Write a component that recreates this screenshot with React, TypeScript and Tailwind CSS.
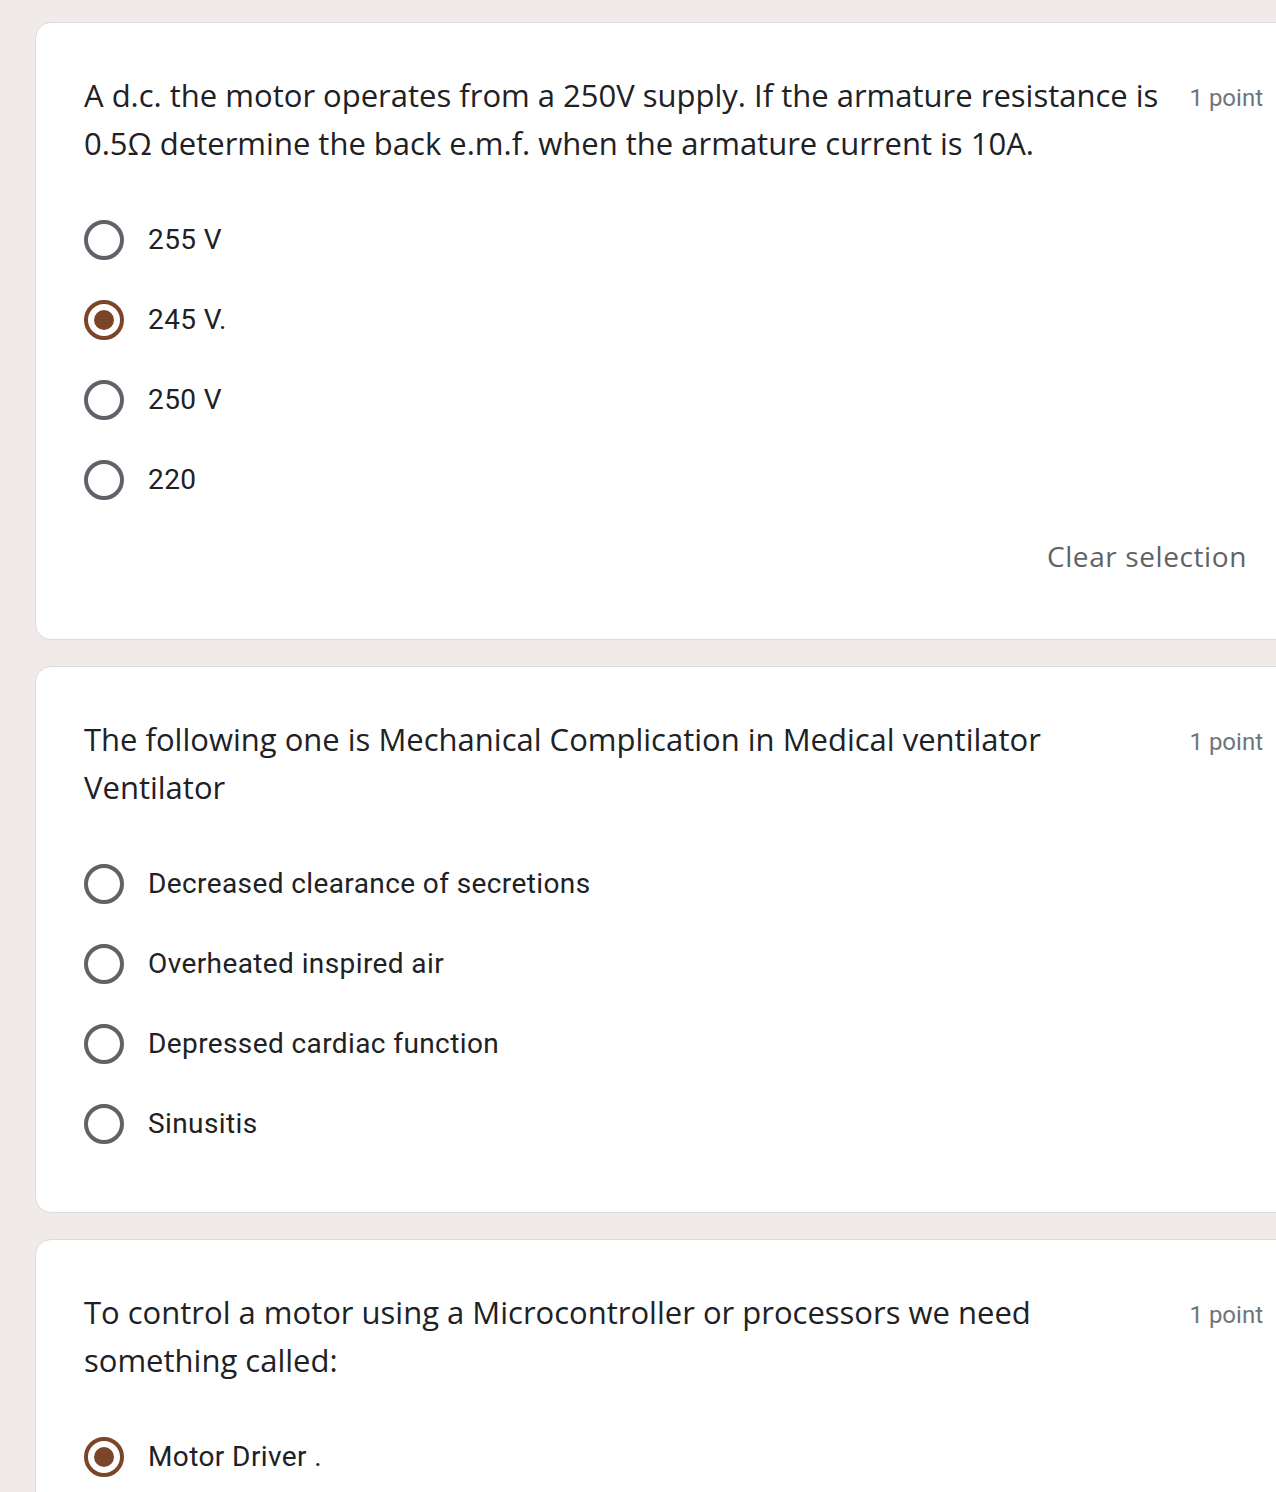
import React from "react";

const titleFont = { fontFamily: "'Open Sans', 'Noto Sans', sans-serif" };

function Radio({ checked }: { checked?: boolean }) {
  return (
    <div
      className={
        "w-[40px] h-[40px] rounded-full border-[4px] flex items-center justify-center shrink-0 " +
        (checked ? "border-[#7a4528]" : "border-[#5f6368]")
      }
    >
      {checked && <div className="w-[20px] h-[20px] rounded-full bg-[#7a4528]" />}
    </div>
  );
}

function Option({ label, checked }: { label: string; checked?: boolean }) {
  return (
    <div className="h-[80px] flex items-center">
      <Radio checked={checked} />
      <span className="ml-[24px] text-[28px] leading-[40px] text-[#202124] font-['Roboto',sans-serif] tracking-[0.4px]">
        {label}
      </span>
    </div>
  );
}

function Card({
  title,
  options,
  selected,
  clear,
}: {
  title: string;
  options: string[];
  selected?: number;
  clear?: boolean;
}) {
  return (
    <div
      className={
        "w-[1280px] shrink-0 bg-white border border-[#dadce0] rounded-[16px] pt-[48px] pl-[48px] pr-[51px] " +
        (clear ? "pb-[47px]" : "pb-[48px]")
      }
    >
      <div className="flex items-start">
        <div
          className="flex-1 text-[31px] leading-[48px] text-[#202124]"
          style={titleFont}
        >
          {title}
        </div>
        <div className="ml-[20px] mt-[11px] text-[24px] leading-[32px] text-[#70757a] font-['Roboto',sans-serif] whitespace-nowrap">
          1 point
        </div>
      </div>
      <div className="mt-[33px]">
        {options.map((o, i) => (
          <Option key={i} label={o} checked={selected === i} />
        ))}
      </div>
      {clear && (
        <div className="flex justify-end h-[72px] items-center">
          <span
            className="px-[16px] text-[28px] font-medium text-[#5f6368] tracking-[0.6px]"
            style={titleFont}
          >
            Clear selection
          </span>
        </div>
      )}
    </div>
  );
}

export default function App() {
  return (
    <div className="w-[1276px] h-[1492px] overflow-hidden bg-[#f0ebe9] pt-[22px] pl-[35px]">
      <div className="flex flex-col gap-[26px]">
        <Card
          title="A d.c. the motor operates from a 250V supply. If the armature resistance is 0.5Ω determine the back e.m.f. when the armature current is 10A."
          options={["255 V", "245 V.", "250 V", "220"]}
          selected={1}
          clear
        />
        <Card
          title="The following one is Mechanical Complication in Medical ventilator Ventilator"
          options={[
            "Decreased clearance of secretions",
            "Overheated inspired air",
            "Depressed cardiac function",
            "Sinusitis",
          ]}
        />
        <Card
          title="To control a motor using a Microcontroller or processors we need something called:"
          options={["Motor Driver ."]}
          selected={0}
        />
      </div>
    </div>
  );
}
